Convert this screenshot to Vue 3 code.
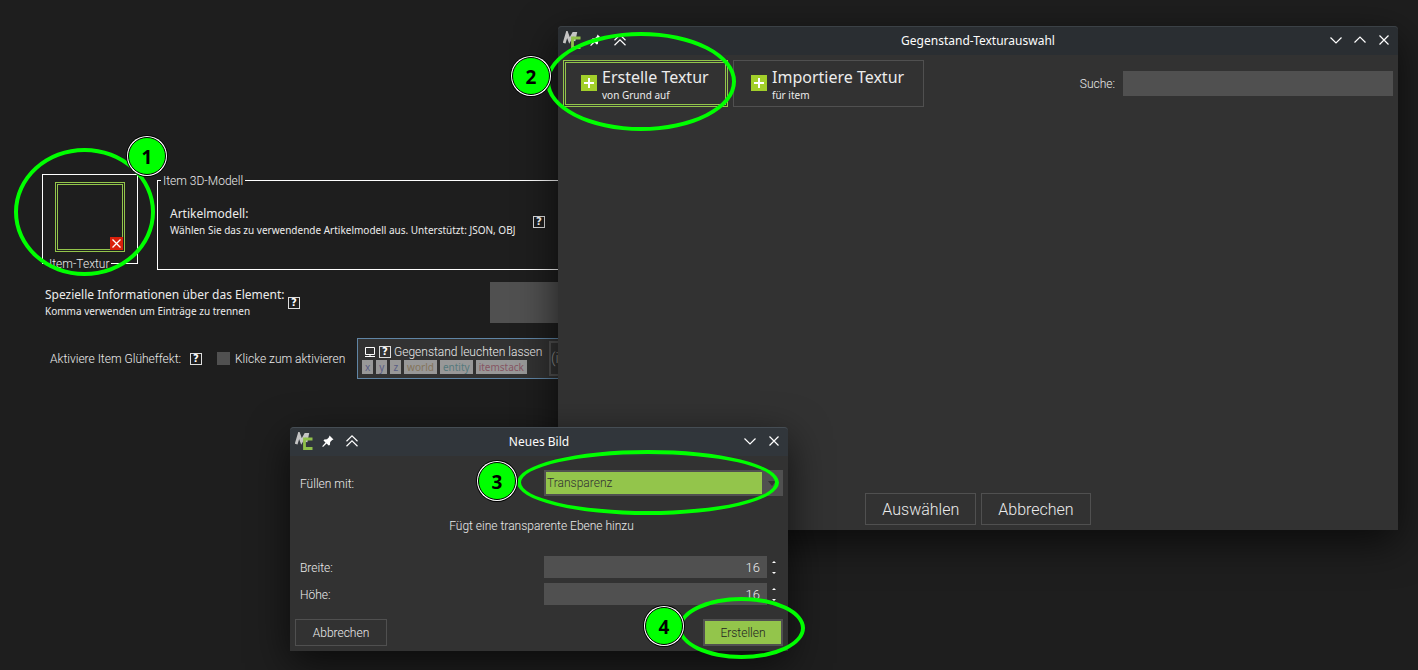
<script setup>
import { ref } from 'vue'

const fill = ref('Transparenz')
const width = ref(16)
const height = ref(16)
const search = ref('')
const info = ref('')
const glow = ref(false)

const variables = ['x', 'y', 'z', 'world', 'entity', 'itemstack']
const steps = [1, 2, 3, 4]
</script>

<template>
  <div class="desktop">
    <main class="editor">
      <div class="row top-row">
        <div class="texture">
          <button class="texture-slot" aria-label="Item-Textur wählen"></button>
          <button class="remove" aria-label="Textur entfernen">
            <svg viewBox="0 0 13 13"><path d="M2.5 2.5l8 8M10.5 2.5l-8 8" /></svg>
          </button>
          <span class="texture-caption">Item-Textur</span>
        </div>
        <fieldset class="model">
          <legend>Item 3D-Modell</legend>
          <div class="hint">
            <div class="hint-text">
              <div class="hint-title">Artikelmodell:</div>
              <div class="hint-sub">Wählen Sie das zu verwendende Artikelmodell aus. Unterstützt: JSON, OBJ</div>
            </div>
            <button class="help">?</button>
          </div>
        </fieldset>
      </div>

      <div class="row info-row">
        <div class="hint">
          <label for="info">
            <span class="hint-title">Spezielle Informationen über das Element:</span>
            <span class="hint-sub">Komma verwenden um Einträge zu trennen</span>
          </label>
          <button class="help">?</button>
        </div>
        <input id="info" v-model="info" class="info-input" type="text" />
      </div>

      <div class="row glow-row">
        <span class="glow-label">Aktiviere Item Glüheffekt:</span>
        <button class="help">?</button>
        <label class="check"><input v-model="glow" type="checkbox" />Klicke zum aktivieren</label>
        <section class="procedure">
          <div class="procedure-main">
            <div class="procedure-head">
              <svg class="monitor" viewBox="0 0 12 12"><path d="M1.5 1.5h9v7h-9zM1 10.5h10M5 9h2" /></svg>
              <button class="help">?</button>
              <span>Gegenstand leuchten lassen</span>
            </div>
            <div class="chips">
              <span v-for="name in variables" :key="name" class="chip" :class="name">{{ name }}</span>
            </div>
          </div>
          <div class="condition">(i</div>
        </section>
      </div>
    </main>

    <section class="window picker">
      <header class="titlebar">
        <div class="tools">
          <svg class="logo" viewBox="0 0 18 18">
            <path class="logo-m" d="M1.200 12L4 2.500l2.500 7L10.500 2.500h2L11 10" />
            <path class="logo-c" d="M17.500 7h-8v9.500h8" />
          </svg>
          <button aria-label="Anheften"><svg viewBox="0 0 12 12"><path class="solid" d="M7.5 0.5l4 4-1.3.5-2 2.1-.3 2.8-1.2.7-2.1-2.1L1 12 .2 11.3l3.3-3.7-2-2 .8-1.1 2.7-.3 2-2z" /></svg></button>
          <button aria-label="Einrollen"><svg viewBox="0 0 12 12"><path d="M.5 6.2L6 .9l5.500 5.300M.5 11.200L6 5.900l5.500 5.300" /></svg></button>
        </div>
        <h1>Gegenstand-Texturauswahl</h1>
        <div class="tools end">
          <button aria-label="Minimieren"><svg viewBox="0 0 12 12"><path d="M.5 3.500L6 9l5.500-5.500" /></svg></button>
          <button aria-label="Maximieren"><svg viewBox="0 0 12 12"><path d="M.5 8.500L6 3l5.500 5.500" /></svg></button>
          <button aria-label="Schließen"><svg viewBox="0 0 12 12"><path d="M1.500 1.500l9 9M10.500 1.500l-9 9" /></svg></button>
        </div>
      </header>
      <div class="picker-body">
        <div class="toolbar">
          <button class="big selected">
            <svg class="plus" viewBox="0 0 16 16"><path d="M8 3v10M3 8h10" /></svg>
            <span><span class="big-title">Erstelle Textur</span><span class="big-sub">von Grund auf</span></span>
          </button>
          <button class="big import">
            <svg class="plus" viewBox="0 0 16 16"><path d="M8 3v10M3 8h10" /></svg>
            <span><span class="big-title">Importiere Textur</span><span class="big-sub">für item</span></span>
          </button>
          <label class="search">Suche:<input v-model="search" type="text" /></label>
        </div>
        <footer class="picker-actions">
          <button class="action">Auswählen</button>
          <button class="action">Abbrechen</button>
        </footer>
      </div>
    </section>

    <section class="window dialog">
      <header class="titlebar active">
        <div class="tools">
          <svg class="logo" viewBox="0 0 18 18">
            <path class="logo-m" d="M1.200 12L4 2.500l2.500 7L10.500 2.500h2L11 10" />
            <path class="logo-c" d="M17.500 7h-8v9.500h8" />
          </svg>
          <button aria-label="Anheften"><svg viewBox="0 0 12 12"><path class="solid" d="M7.5 0.5l4 4-1.3.5-2 2.1-.3 2.8-1.2.7-2.1-2.1L1 12 .2 11.3l3.3-3.7-2-2 .8-1.1 2.7-.3 2-2z" /></svg></button>
          <button aria-label="Einrollen"><svg viewBox="0 0 12 12"><path d="M.5 6.200L6 .9l5.500 5.300M.5 11.200L6 5.900l5.500 5.300" /></svg></button>
        </div>
        <h1>Neues Bild</h1>
        <div class="tools end">
          <button aria-label="Minimieren"><svg viewBox="0 0 12 12"><path d="M.5 3.500L6 9l5.500-5.500" /></svg></button>
          <button aria-label="Schließen"><svg viewBox="0 0 12 12"><path d="M1.500 1.500l9 9M10.500 1.500l-9 9" /></svg></button>
        </div>
      </header>
      <div class="dialog-body">
        <div class="field fill-field">
          <label for="fill">Füllen mit:</label>
          <div class="combo">
            <select id="fill" v-model="fill"><option>Transparenz</option></select>
            <svg viewBox="0 0 8 5"><path d="M0 0h8L4 5z" /></svg>
          </div>
        </div>
        <p class="note">Fügt eine transparente Ebene hinzu</p>
        <div class="field">
          <label for="width">Breite:</label>
          <div class="spinner">
            <input id="width" v-model="width" type="text" />
            <div class="arrows">
              <button aria-label="Breite erhöhen" @click="width++"><svg viewBox="0 0 4 2"><path d="M0 2h4L2 0z" /></svg></button>
              <button aria-label="Breite verringern" @click="width--"><svg viewBox="0 0 4 2"><path d="M0 0h4L2 2z" /></svg></button>
            </div>
          </div>
        </div>
        <div class="field">
          <label for="height">Höhe:</label>
          <div class="spinner">
            <input id="height" v-model="height" type="text" />
            <div class="arrows">
              <button aria-label="Höhe erhöhen" @click="height++"><svg viewBox="0 0 4 2"><path d="M0 2h4L2 0z" /></svg></button>
              <button aria-label="Höhe verringern" @click="height--"><svg viewBox="0 0 4 2"><path d="M0 0h4L2 2z" /></svg></button>
            </div>
          </div>
        </div>
        <footer class="dialog-actions">
          <button class="small">Abbrechen</button>
          <button class="small primary">Erstellen</button>
        </footer>
      </div>
    </section>

    <template v-for="n in steps" :key="n">
      <div class="ring" :class="'ring-' + n"></div>
      <div class="step" :class="'step-' + n">{{ n }}</div>
    </template>
  </div>
</template>

<style>
body {
  background: #1e1e1e;
}
</style>

<style scoped>
* {
  box-sizing: border-box;
}
.desktop {
  position: relative;
  min-height: 100vh;
  overflow: hidden;
  background: #1e1e1e;
  color: #ececec;
  font: 300 12px/16px Roboto, "Noto Sans", sans-serif;
}
button {
  margin: 0;
  padding: 0;
  border: 0;
  background: none;
  color: inherit;
  font: inherit;
}
input,
select {
  margin: 0;
  border: 0;
  border-radius: 0;
  outline: 0;
  background: #505050;
  color: inherit;
  font: inherit;
}
svg {
  display: block;
  flex: none;
  fill: none;
  stroke: #fff;
}

.editor {
  padding: 173px 60px 0 42px;
}
.row {
  display: flex;
}
.top-row {
  gap: 19px;
}
.texture {
  position: relative;
  width: 96px;
  height: 90px;
  margin-top: 1px;
  padding: 7px 12px;
  border: 1px solid #fff;
}
.texture-slot {
  display: block;
  width: 70px;
  height: 70px;
  border: 3px double #93c54b;
}
.remove {
  position: absolute;
  right: 14px;
  bottom: 13px;
  width: 13px;
  height: 13px;
  background: #d9200b;
}
.remove svg {
  stroke-width: 1.3;
}
.texture-caption {
  position: absolute;
  left: 4px;
  bottom: -9px;
  padding: 0 2px;
  background: #1e1e1e;
}
.model {
  flex: 1;
  min-width: 0;
  height: 97px;
  margin: 0;
  padding: 18px 12px 0;
  border: 1px solid #fff;
}
.model legend {
  height: 15px;
  margin-left: -9px;
  padding: 0 2px;
  line-height: 17px;
}
.hint {
  display: flex;
  align-items: center;
  gap: 6px;
  white-space: nowrap;
}
.hint-text {
  width: 357px;
}
.hint-title,
.hint-sub {
  display: block;
  font: 400 12px/16px "Noto Sans", sans-serif;
}
.hint-sub {
  font-size: 10px;
}
.help {
  flex: none;
  width: 12px;
  height: 12px;
  border: 1px solid #ddd;
  font: 700 10px/10px "DejaVu Sans", sans-serif;
  text-align: center;
  color: #fff;
}
.info-row {
  align-items: center;
  margin: 12px 0 15px 3px;
}
.info-row .hint {
  width: 445px;
}
.info-row label {
  width: 237px;
}
.info-input {
  flex: 1;
  min-width: 0;
  height: 41px;
}
.glow-row {
  align-items: center;
  padding-left: 8px;
  white-space: nowrap;
}
.glow-label {
  width: 134px;
}
.glow-row > .help {
  margin-left: 6px;
}
.check {
  display: flex;
  align-items: center;
  gap: 5px;
  width: 131px;
  margin-left: 15px;
}
.check input {
  appearance: none;
  width: 13px;
  height: 13px;
}
.procedure {
  display: flex;
  flex: 1;
  gap: 4px;
  height: 41px;
  margin-left: 9px;
  padding: 2px 4px;
  border: 1px solid #6085a5;
  background: #323232;
}
.procedure-main {
  width: 183px;
}
.procedure-head {
  display: flex;
  align-items: center;
  gap: 3px;
  padding: 3px 0 0 2px;
}
.monitor {
  width: 12px;
  height: 12px;
}
.chips {
  display: flex;
  gap: 3px;
}
.chip {
  height: 14px;
  padding: 0 3px;
  background: #989898;
  color: #595d84;
  font: 400 10px/14px "Noto Sans", sans-serif;
}
.world {
  color: #84745a;
}
.entity {
  color: #55797c;
}
.itemstack {
  color: #865563;
}
.condition {
  flex: 1;
  height: 35px;
  border: 2px solid #505050;
  color: #999;
  font-size: 14px;
  line-height: 31px;
}

.window {
  position: absolute;
  display: flex;
  flex-direction: column;
  border-radius: 4px 4px 0 0;
  background: #323232;
  box-shadow: 0 12px 40px rgba(0, 0, 0, 0.65);
}
.picker {
  top: 26px;
  right: 20px;
  left: 558px;
  min-height: 504px;
}
.dialog {
  top: 427px;
  left: 290px;
  width: 498px;
}
.titlebar {
  display: grid;
  grid-template-columns: 1fr auto 1fr;
  align-items: center;
  height: 29px;
  border-top: 1px solid #3b4146;
  border-radius: 4px 4px 0 0;
  background: #2a2e32;
}
.titlebar.active {
  border-color: #454d54;
  background: #31363b;
}
.titlebar h1 {
  margin: 0;
  color: #fcfcfc;
  font: 400 12px/18px "Noto Sans", sans-serif;
}
.tools {
  display: flex;
  align-items: center;
  height: 26px;
  margin-bottom: 2px;
  padding: 0 2px;
}
.tools.end {
  justify-content: flex-end;
}
.tools button {
  display: grid;
  place-items: center;
  width: 24px;
  height: 24px;
}
.tools button svg {
  width: 12px;
  height: 12px;
  stroke-width: 1.200;
}
.tools .solid {
  fill: #fff;
  stroke: none;
}
.logo {
  width: 18px;
  height: 18px;
  margin: 0 3px;
}
.logo-m {
  stroke: #c4c4c4;
  stroke-width: 2.800;
}
.logo-c {
  stroke: #8fc04a;
  stroke-width: 2.800;
}

.picker-body {
  display: flex;
  flex: 1;
  flex-direction: column;
  justify-content: space-between;
  padding: 5px;
}
.toolbar {
  display: flex;
  gap: 5px;
}
.big {
  display: flex;
  align-items: center;
  gap: 5px;
  height: 47px;
  padding: 0 16px 0 17px;
  border: 1px solid #505050;
  font: 400 16px/20px "Noto Sans", sans-serif;
  text-align: left;
}
.big.selected {
  min-width: 165px;
  padding: 0 14px 0 15px;
  border: 3px double #93c54b;
}
.big.import {
  min-width: 191px;
}
.plus {
  width: 16px;
  height: 16px;
  margin-bottom: 2px;
  background: #a2cf2a;
  stroke-width: 2;
}
.big-title,
.big-sub {
  display: block;
}
.big-title {
  padding-top: 2px;
}
.big-sub {
  font-size: 10px;
  line-height: 16px;
}
.search {
  display: flex;
  flex: 1;
  align-items: center;
  justify-content: flex-end;
  gap: 8px;
}
.search input {
  width: 270px;
  height: 25px;
}
.picker-actions {
  display: flex;
  justify-content: center;
  gap: 5px;
}
.action {
  height: 32px;
  padding: 1px 16px 0;
  border: 1px solid #505050;
  font-size: 16px;
}

.dialog-body {
  padding: 14px 5px 5px;
}
.field {
  display: grid;
  grid-template-columns: 244px 1fr;
  align-items: center;
  margin-bottom: 5px;
  padding-left: 5px;
}
.field label {
  padding-top: 2px;
}
.combo {
  display: flex;
  align-items: center;
  gap: 6px;
  height: 26px;
  padding: 2px;
  background: #505050;
}
.combo select {
  appearance: none;
  width: 216px;
  height: 22px;
  padding: 0 1px;
  background: #93c54b;
  color: #323232;
}
.combo svg {
  width: 8px;
  height: 5px;
  fill: #323232;
  stroke: none;
}
.note {
  margin: 0;
  padding: 17px 0 22px 5px;
  text-align: center;
}
.spinner {
  display: flex;
  gap: 5px;
  padding-right: 7px;
}
.spinner input {
  flex: 1;
  min-width: 0;
  height: 22px;
  padding: 0 7px;
  font-size: 13px;
  text-align: right;
}
.arrows {
  display: flex;
  flex-direction: column;
  width: 4px;
}
.arrows button {
  display: grid;
  flex: 1;
  place-items: center;
}
.arrows svg {
  width: 4px;
  height: 2px;
  fill: #fff;
  stroke: none;
}
.dialog-actions {
  display: flex;
  justify-content: space-between;
  margin-top: 14px;
}
.small {
  min-width: 92px;
  height: 27px;
  border: 1px solid #505050;
}
.small.primary {
  min-width: 80px;
  border-width: 2px;
  background: #93c54b;
  color: #222;
}

.ring {
  position: absolute;
  border: 4px solid #0f0;
  border-radius: 50%;
  pointer-events: none;
}
.ring-1 {
  top: 148px;
  left: 14px;
  width: 141px;
  height: 128px;
}
.ring-2 {
  top: 32px;
  left: 546px;
  width: 190px;
  height: 99px;
}
.ring-3 {
  top: 450px;
  left: 517px;
  width: 262px;
  height: 65px;
}
.ring-4 {
  top: 597px;
  left: 678px;
  width: 127px;
  height: 62px;
}
.step {
  position: absolute;
  width: 38px;
  height: 38px;
  border: 1px solid #000;
  border-radius: 50%;
  background: #0f0;
  box-shadow: 0 0 0 1px #fff, 0 0 0 2px #000;
  color: #000;
  font: 700 19px/38px "Noto Sans", sans-serif;
  text-align: center;
}
.step-1 {
  top: 137px;
  left: 128px;
}
.step-2 {
  top: 57px;
  left: 512px;
}
.step-3 {
  top: 462px;
  left: 478px;
}
.step-4 {
  top: 607px;
  left: 645px;
}
</style>
